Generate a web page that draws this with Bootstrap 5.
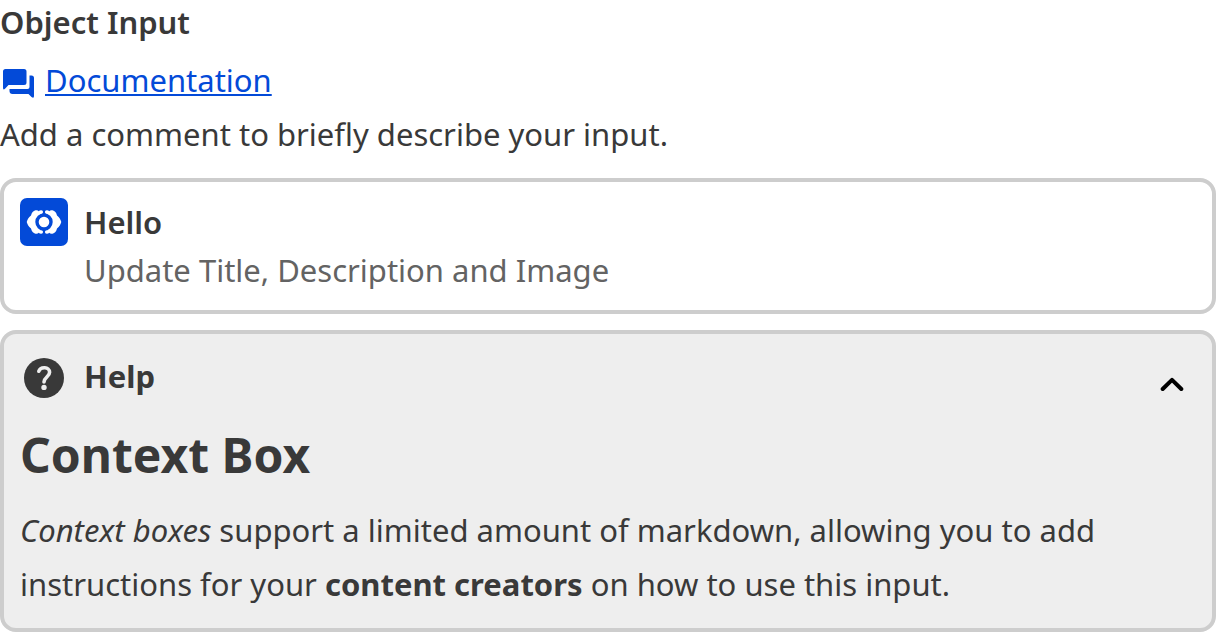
<!DOCTYPE html>
<html lang="en">
<head>
<meta charset="utf-8">
<meta name="viewport" content="width=device-width, initial-scale=1">
<title>Object Input</title>
<link href="https://cdn.jsdelivr.net/npm/bootstrap@5.3.0/dist/css/bootstrap.min.css" rel="stylesheet">
<style>
  body { font-family: "Noto Sans", sans-serif; font-size: 31px; line-height: 48px; color: #393939; overflow: hidden; }
  .field-title { font-size: 31px; line-height: 44px; font-weight: 600; margin-bottom: 12px; }
  .doc-row { height: 48px; margin-bottom: 3px; }
  .doc-row svg { margin: 6px 9px 0 0; }
  .doc-link { color: #034ad8; text-decoration-thickness: 2px; text-underline-offset: 2px; text-decoration-skip-ink: none; }
  .field-note { line-height: 54px; margin-bottom: 17px; }
  .panel { border: 4px solid #cdcdcd; border-radius: 16px; padding: 16px; }
  .panel-title { font-size: 31px; line-height: 48px; font-weight: 600; }
  .panel-sub { color: #636363; }
  .help-panel { background: #eee; height: 302px; padding-top: 18px; }
  .help-panel .panel-title { font-weight: 700; }
  .help-panel h1 { font-size: 48px; line-height: 48px; font-weight: 700; margin: 31px 0 24px; }
  .help-panel p { line-height: 54px; }
  .chevron { margin: 0 12px 0 auto; position: relative; top: 8px; }
</style>
</head>
<body>
<main>
  <h2 class="field-title">Object Input</h2>
  <div class="doc-row d-flex align-items-center">
    <svg width="36" height="36" viewBox="0 0 36 36" fill="#034ad8" aria-hidden="true">
      <path d="M5.500 4H24q2.500 0 2.500 2.500V17.500q0 2.500-2.500 2.500H8.500L5 23.700Q3 25.500 3 22.500V6.500Q3 4 5.500 4Z"/>
      <path d="M29.500 10.500H31.500q2.500 0 2.500 2.500V31Q34 34 31.500 32L28.500 29H12.500Q9.500 29 9.500 26V24H27.500q2 0 2-2Z"/>
    </svg>
    <a class="doc-link" href="#">Documentation</a>
  </div>
  <p class="field-note">Add a comment to briefly describe your input.</p>

  <section class="panel d-flex align-items-start gap-3 mb-3">
    <svg width="48" height="48" viewBox="0 0 48 48" class="flex-shrink-0" aria-hidden="true">
      <rect width="48" height="48" rx="7" fill="#034ad8"/>
      <path id="lobe" fill="#fff" d="M21 12.300C23.200 12.300 23.600 14.300 22.300 15.800L20 17V31L22.300 32.200C23.600 33.700 23.200 35.700 21 35.700Q19.500 35.700 18.800 34.800Q17.500 36.200 15.500 35.700Q12 34.800 11 30.500C8.500 28.500 7.500 26.500 6.700 24C7.500 21.500 8.500 19.500 11 17.500Q12 13.200 15.500 12.300Q17.500 11.800 18.800 13.200Q19.500 12.300 21 12.300Z"/>
      <use href="#lobe" transform="translate(48 0) scale(-1 1)"/>
      <circle cx="24" cy="24" r="7" fill="#fff" stroke="#034ad8" stroke-width="3.400"/>
    </svg>
    <div>
      <h3 class="panel-title mb-0">Hello</h3>
      <div class="panel-sub">Update Title, Description and Image</div>
    </div>
  </section>

  <section class="panel help-panel">
    <div class="d-flex align-items-center gap-3">
      <svg width="48" height="48" viewBox="0 0 48 48" aria-hidden="true">
        <g transform="translate(0 2)">
          <circle cx="24" cy="24" r="20" fill="#393939"/>
          <path d="M18.800 17.200C20.400 12.400 29.600 12.500 29.600 18.300C29.600 22.800 24 23.300 24 28" fill="none" stroke="#eee" stroke-width="3.600" stroke-linecap="round" stroke-linejoin="round"/>
          <circle cx="24" cy="33.400" r="2.700" fill="#eee"/>
        </g>
      </svg>
      <h3 class="panel-title mb-0">Help</h3>
      <svg class="chevron" width="24" height="16" viewBox="0 0 24 16" fill="none" stroke="#000" stroke-width="4" stroke-linecap="round" stroke-linejoin="round" aria-hidden="true"><path d="M2.700 13L12 3.800L21.300 13"/></svg>
    </div>
    <h1>Context Box</h1>
    <p class="mb-0"><em>Context boxes</em> support a limited amount of markdown, allowing you to add instructions for your <strong>content creators</strong> on how to use this input.</p>
  </section>
</main>
<script src="https://cdn.jsdelivr.net/npm/bootstrap@5.3.0/dist/js/bootstrap.bundle.min.js"></script>
</body>
</html>
